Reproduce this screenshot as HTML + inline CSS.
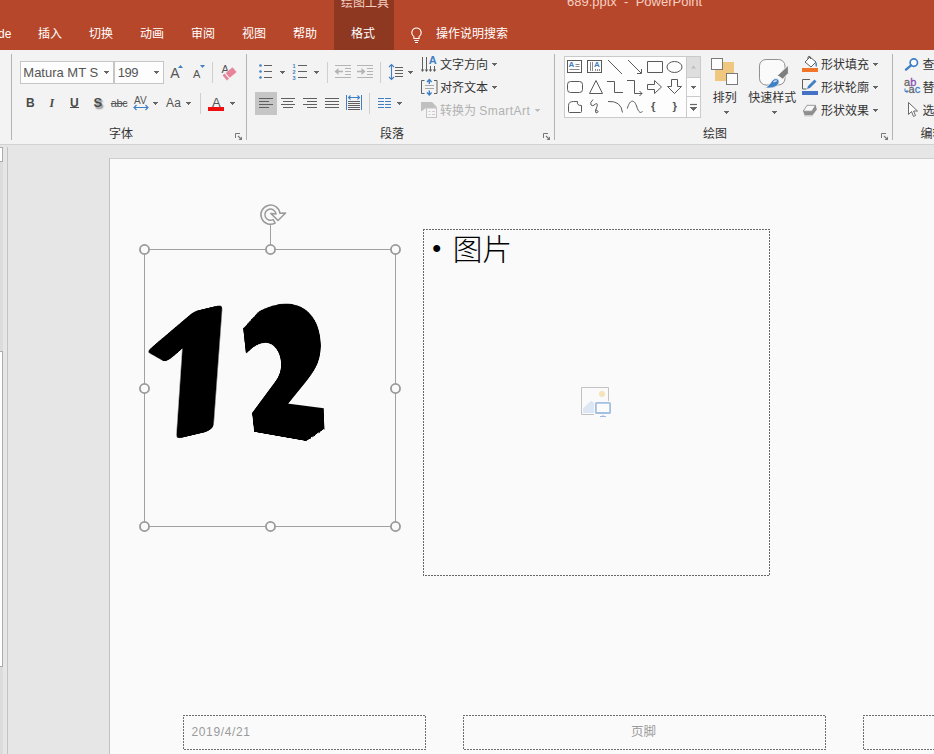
<!DOCTYPE html>
<html lang="zh-CN">
<head>
<meta charset="utf-8">
<title>689.pptx - PowerPoint</title>
<style>
html,body{margin:0;padding:0;}
body{width:934px;height:754px;overflow:hidden;background:#E6E6E6;position:relative;
  font-family:"Liberation Sans","Noto Sans CJK SC",sans-serif;}
#app{position:absolute;left:0;top:0;width:934px;height:754px;overflow:hidden;}
#gfx{position:absolute;left:0;top:0;}
.t{position:absolute;white-space:nowrap;font-size:12px;line-height:16px;height:16px;color:#333;}
.w{color:#fff;}
.dis{color:#b1b1b1;}
.lat{font-family:"Liberation Sans",sans-serif;}
#num{position:absolute;left:0;top:0;width:0;height:0;font-size:300px;line-height:300px;color:#000;white-space:nowrap;}
#num span{position:absolute;display:block;left:0;top:0;transform-origin:0 0;}
#n1{font-family:"NanumGothic","DejaVu Sans",sans-serif;font-weight:800;-webkit-text-stroke:3.67px #000;filter:drop-shadow(-0.39px 0.61px 0 #000) drop-shadow(-0.79px 1.23px 0 #000) drop-shadow(-1.58px 2.45px 0 #000);
  transform:matrix3d(0.76268723,-0.19822424,0,-3.7305874e-05,-0.021551295,0.5579859,0,7.9534672e-05,0,0,1,0,131.25344,314.39628,0,1);}
#n2{font-family:"DejaVu Sans","Liberation Sans",sans-serif;font-weight:bold;filter:drop-shadow(-3.24px 2.07px 0 #000) drop-shadow(-6.47px 4.15px 0 #000) drop-shadow(-12.95px 8.30px 0 #000) drop-shadow(-25.90px 16.59px 0 #000);
  transform:matrix3d(0.22853799,-0.15741806,0,-0.00051055084,0.1899696,0.74763952,0,0.00052581984,0,0,1,0,247.58065,286.19072,0,1);}
#bul{position:absolute;left:0;top:0;color:#000;white-space:nowrap;}
#dot{position:absolute;left:432.300px;top:227.800px;font-size:25.500px;line-height:40px;font-family:"Liberation Sans",sans-serif;}
#pic{position:absolute;left:452.700px;top:227.500px;font-size:29.700px;line-height:40px;font-weight:300;font-family:"Noto Sans CJK SC","Liberation Sans",sans-serif;}
.ft{position:absolute;font-size:12px;line-height:16px;color:#9a9a9a;white-space:nowrap;}
</style>
</head>
<body>
<div id="app">
<svg id="gfx" width="934" height="754" viewBox="0 0 934 754">
<rect x="0" y="0" width="934" height="50" fill="#B7472A"/>
<rect x="334" y="0" width="60" height="50" fill="#8E3822"/>
<rect x="0" y="50" width="934" height="94" fill="#F3F3F3"/>
<rect x="0" y="144" width="934" height="1" fill="#D2D2D2"/>
<rect x="0" y="145" width="934" height="609" fill="#E6E6E6"/>
<rect x="0" y="147" width="3" height="607" fill="#DCDCDC"/>
<rect x="-1" y="147.5" width="3.5" height="14" fill="#FFFFFF" stroke="#ABABAB"/>
<rect x="-1" y="351.5" width="3.5" height="315" fill="#FFFFFF" stroke="#ABABAB"/>
<rect x="7" y="147" width="1" height="607" fill="#C3C3C3"/>
<rect x="109" y="158" width="900" height="700" fill="#FAFAFA"/>
<rect x="109" y="158" width="900" height="1" fill="#CFCFCF"/>
<rect x="109" y="158" width="1" height="700" fill="#C2C2C2"/>
<path d="M416.5 28a4.6 4.6 0 0 0 -2.6 8.4v2.1h5.2v-2.1a4.6 4.6 0 0 0 -2.6 -8.4z" fill="none" stroke="#fff" stroke-width="1.1"/><path d="M414.3 40.5h4.4M415 42.5h3" stroke="#fff" stroke-width="1"/>
<rect x="11" y="54" width="1" height="86" fill="#B4B4B4"/>
<rect x="246" y="54" width="1" height="86" fill="#B4B4B4"/>
<rect x="554" y="54" width="1" height="86" fill="#B4B4B4"/>
<rect x="892" y="54" width="1" height="86" fill="#B4B4B4"/>
<rect x="212" y="62" width="1" height="21" fill="#CFCFCF"/>
<rect x="327" y="62" width="1" height="21" fill="#CFCFCF"/>
<rect x="380" y="62" width="1" height="21" fill="#CFCFCF"/>
<rect x="200" y="93" width="1" height="21" fill="#CFCFCF"/>
<rect x="369" y="93" width="1" height="21" fill="#CFCFCF"/>
<rect x="20.5" y="61.5" width="93" height="22" fill="#FDFDFD" stroke="#C6C6C6"/>
<rect x="114.5" y="61.5" width="49" height="22" fill="#FDFDFD" stroke="#C6C6C6"/>
<path d="M104 71h5v1h-5zM105 72h3v1h-3zM106 73h1v1h-1z" fill="#666666" shape-rendering="crispEdges"/>
<path d="M154 71h5v1h-5zM155 72h3v1h-3zM156 73h1v1h-1z" fill="#666666" shape-rendering="crispEdges"/>
<path d="M178 68l2.5-3 2.5 3z" fill="#3F7FC4"/>
<path d="M200 65h5l-2.5 3z" fill="#3F7FC4"/>
<text x="221.6" y="73" font-family="Liberation Sans, sans-serif" font-size="11" fill="#555">A</text>
<g transform="translate(230.1,73.4) rotate(-40)"><rect x="-3.4" y="-3.4" width="9.500" height="6.8" rx="1" fill="#E8849A" stroke="#F3F3F3" stroke-width="0.6"/><rect x="-7" y="-3.4" width="2.6" height="6.8" fill="#E8849A"/></g>
<rect x="70" y="107" width="9" height="1" fill="#4a4a4a"/>
<path d="M134 107.5h14M136.5 105l-2.5 2.5 2.5 2.5M145.5 105l2.5 2.5-2.5 2.5" fill="none" stroke="#3F7FC4" stroke-width="1.1"/>
<path d="M153 102h5v1h-5zM154 103h3v1h-3zM155 104h1v1h-1z" fill="#666666" shape-rendering="crispEdges"/>
<path d="M186 102h5v1h-5zM187 103h3v1h-3zM188 104h1v1h-1z" fill="#666666" shape-rendering="crispEdges"/>
<rect x="208" y="107" width="16" height="4" fill="#F00F0F"/>
<path d="M230 102h5v1h-5zM231 103h3v1h-3zM232 104h1v1h-1z" fill="#666666" shape-rendering="crispEdges"/>
<path d="M235.5 138V133.5H240" fill="none" stroke="#777" stroke-width="1"/><path d="M238 136l3.2 3.2" stroke="#777" stroke-width="1.2" fill="none"/><path d="M242 136.5V140H238.5z" fill="#777"/>
<circle cx="260.5" cy="65.5" r="1.3" fill="#3F7FC4"/><rect x="264" y="65.0" width="8" height="1" fill="#5f5f5f"/>
<circle cx="260.5" cy="71.5" r="1.3" fill="#3F7FC4"/><rect x="264" y="71.0" width="8" height="1" fill="#5f5f5f"/>
<circle cx="260.5" cy="77.5" r="1.3" fill="#3F7FC4"/><rect x="264" y="77.0" width="8" height="1" fill="#5f5f5f"/>
<path d="M280 71h5v1h-5zM281 72h3v1h-3zM282 73h1v1h-1z" fill="#666666" shape-rendering="crispEdges"/>
<rect x="298" y="65.0" width="9" height="1" fill="#5f5f5f"/>
<rect x="298" y="71.0" width="9" height="1" fill="#5f5f5f"/>
<rect x="298" y="77.0" width="9" height="1" fill="#5f5f5f"/>
<path d="M314 71h5v1h-5zM315 72h3v1h-3zM316 73h1v1h-1z" fill="#666666" shape-rendering="crispEdges"/>
<path d="M335 65.500h16M345 68.500h6M345 71.500h6M345 74.500h6M335 77.500h16" stroke="#B4B4B4" stroke-width="1"/><path d="M336 71.500h7" fill="none" stroke="#B4B4B4" stroke-width="1.600"/><path d="M334.500 71.500l4-3.500v7z" fill="#B4B4B4"/>
<path d="M357 65.500h16M367 68.500h6M367 71.500h6M367 74.500h6M357 77.500h16" stroke="#B4B4B4" stroke-width="1"/><path d="M357 71.500h7" fill="none" stroke="#B4B4B4" stroke-width="1.600"/><path d="M365.500 71.500l-4-3.500v7z" fill="#B4B4B4"/>
<path d="M391.5 64.5v15M389 67l2.5-2.5 2.5 2.5M389 77l2.5 2.5 2.5-2.5" fill="none" stroke="#3F7FC4" stroke-width="1.1"/><path d="M395 67.5h8M395 70.5h8M395 73.5h8M395 76.5h8" stroke="#5f5f5f" stroke-width="1"/>
<path d="M408 71h5v1h-5zM409 72h3v1h-3zM410 73h1v1h-1z" fill="#666666" shape-rendering="crispEdges"/>
<rect x="255" y="92" width="22" height="23" fill="#C6C6C6"/>
<path d="M259 98.5h14M259 101.5h10M259 104.5h14M259 107.5h10" stroke="#5f5f5f" stroke-width="1"/>
<path d="M281 98.5h14M283 101.5h10M281 104.5h14M283 107.5h10" stroke="#5f5f5f" stroke-width="1"/>
<path d="M303 98.5h14M307 101.5h10M303 104.5h14M307 107.5h10" stroke="#5f5f5f" stroke-width="1"/>
<path d="M325 98.5h14M325 101.5h14M325 104.5h14M325 107.5h14" stroke="#5f5f5f" stroke-width="1"/>
<path d="M346.5 95v15M361.5 95v15" stroke="#3F7FC4" stroke-width="1"/><path d="M348.5 97.5h11M350.5 95.5l-2 2 2 2M357.5 95.5l2 2-2 2" fill="none" stroke="#3F7FC4" stroke-width="1.1"/><path d="M348 101.5h12M348 103.5h12M348 105.5h12M348 107.5h12M348 109.5h12" stroke="#5f5f5f" stroke-width="1"/>
<path d="M378 98.5h6M385 98.5h6M378 101.5h6M385 101.5h6M378 104.5h6M385 104.5h6M378 107.5h6M385 107.5h6" stroke="#3F7FC4" stroke-width="1"/>
<path d="M397 102h5v1h-5zM398 103h3v1h-3zM399 104h1v1h-1z" fill="#666666" shape-rendering="crispEdges"/>
<path d="M422.500 57v13M426.500 57v13M430.500 66v4M434.500 66v4" stroke="#5f5f5f" stroke-width="1"/><path d="M420.700 69.500l1.800 2.500 1.800-2.500zM424.700 69.500l1.800 2.500 1.800-2.500zM428.700 69.500l1.800 2.500 1.800-2.500zM432.700 69.500l1.800 2.500 1.800-2.500z" fill="#5f5f5f"/>
<path d="M492 63h5v1h-5zM493 64h3v1h-3zM494 65h1v1h-1z" fill="#666666" shape-rendering="crispEdges"/>
<path d="M424.500 80.500h-3v13h3M434 80.500h3v13h-3" fill="none" stroke="#5f5f5f" stroke-width="1"/><path d="M425 85.500h9M425 88.500h9" stroke="#a8a8a8" stroke-width="1"/><path d="M429.300 79.500v4.500M427 82l2.300-2.500 2.300 2.500M429.300 95v-4.500M427 92.500l2.300 2.500 2.300-2.500" fill="none" stroke="#3F7FC4" stroke-width="1.400"/>
<path d="M492 86h5v1h-5zM493 87h3v1h-3zM494 88h1v1h-1z" fill="#666666" shape-rendering="crispEdges"/>
<path d="M421 102h11l4.500 4.500v1.500h-10.500l-5 3.500z" fill="#C0C0C0"/><rect x="426.500" y="108" width="10" height="9.500" fill="#F6F6F6" stroke="#C3C3C3"/><path d="M428.500 111.500h2M432 111.500h3M428.500 114.500h2M432 114.500h3" stroke="#D5C6D2" stroke-width="1"/>
<path d="M535 109h5v1h-5zM536 110h3v1h-3zM537 111h1v1h-1z" fill="#BDBDBD" shape-rendering="crispEdges"/>
<path d="M543.5 138V133.5H548" fill="none" stroke="#777" stroke-width="1"/><path d="M546 136l3.2 3.2" stroke="#777" stroke-width="1.2" fill="none"/><path d="M550 136.5V140H546.5z" fill="#777"/>
<rect x="564.5" y="56.5" width="136" height="61" fill="#FDFDFD" stroke="#CACACA"/>
<rect x="686.5" y="56.5" width="14" height="61" fill="#FDFDFD" stroke="#CACACA"/>
<rect x="687" y="57" width="13" height="20" fill="#DEDEDE"/>
<path d="M686.5 77.5h14M686.5 96.5h14" stroke="#CACACA"/>
<path d="M691 68.5h5l-2.5-3z" fill="#BDBDBD"/>
<path d="M691 86h5v1h-5zM692 87h3v1h-3zM693 88h1v1h-1z" fill="#666666" shape-rendering="crispEdges"/>
<path d="M690 104.500h7" stroke="#676767" stroke-width="1.200"/>
<path d="M690 106.5h7v1h-7zM691 107.5h5v1h-5zM692 108.5h3v1h-3zM693 109.5h1v1h-1z" fill="#676767" shape-rendering="crispEdges"/>
<rect x="567.5" y="60.5" width="14" height="12" fill="none" stroke="#595959"/><path d="M575.5 64.5h4M575.5 66.5h4M569.5 69.5h10" stroke="#8a8a8a"/>
<rect x="587.5" y="60.5" width="14" height="12" fill="none" stroke="#595959"/><path d="M590.5 62v9M592.5 62v9M595.5 69v2M597.5 69v2M599.5 69v2" stroke="#8a8a8a"/>
<path d="M608 60l14 14" fill="none" stroke="#595959" stroke-width="1" />
<path d="M628 60l13 13M641.5 69v4.5h-4.5" fill="none" stroke="#595959" stroke-width="1" />
<path d="M647.5 61.5h15v11h-15z" fill="none" stroke="#595959" stroke-width="1" />
<ellipse cx="674.5" cy="67" rx="7.5" ry="5.5" fill="none" stroke="#595959"/>
<rect x="567.5" y="81.5" width="15" height="11" rx="3" fill="none" stroke="#595959"/>
<path d="M589.5 93.5l6.5-13 6.5 13z" fill="none" stroke="#595959" stroke-width="1" />
<path d="M607 81.500h7.500v11h8.500" fill="none" stroke="#595959" stroke-width="1" />
<path d="M627 80.500h7.500v13h7.500M639.500 91l2.500 2.500-2.500 2.500" fill="none" stroke="#595959" stroke-width="1" />
<path d="M647.5 84.5h7v-4l7 6.500-7 6.500v-4h-7z" fill="none" stroke="#595959" stroke-width="1" />
<path d="M671.5 79.5h6v7h4l-7 7-7-7h4z" fill="none" stroke="#595959" stroke-width="1" />
<path d="M568.500 111.500v-6q0-4 5-4h4q-1 4 4 4v6q0 1-1 1h-11q-1 0-1-1z" fill="none" stroke="#595959" stroke-width="1" />
<path d="M593 99.500q-3.500 3.500-2 5.500t4.500-1q2.500-1.500 1.500 2.500l-1.500 4.500q0 3 2 1.500t-2.500-2.500" fill="none" stroke="#595959" stroke-width="1" />
<path d="M608 101.500q13-1 14.500 11" fill="none" stroke="#595959" stroke-width="1" />
<path d="M627.300 108.600C629.500 100 634 98.500 636.500 106S640.500 113 642.500 111.500" fill="none" stroke="#595959" stroke-width="1" />
<rect x="715" y="62" width="19" height="19" fill="#F0C77F"/>
<rect x="711.5" y="58.5" width="11" height="11" fill="#FDFDFD" stroke="#7a7a7a"/>
<rect x="726.5" y="73.5" width="11" height="11" fill="#FDFDFD" stroke="#7a7a7a"/>
<path d="M724 111h5v1h-5zM725 112h3v1h-3zM726 113h1v1h-1z" fill="#666666" shape-rendering="crispEdges"/>
<rect x="759.500" y="59.500" width="25.500" height="25.500" rx="6.500" fill="#FAFAFA" stroke="#909090"/>
<path d="M788.400 65.200v8l-5.700 6-5.400-3.600z" fill="#7E7E7E" stroke="#F3F3F3" stroke-width="1"/>
<path d="M778.300 76.300l4 2.700" stroke="#F3F3F3" stroke-width="0.900"/>
<path d="M765.500 88q4.500-3.500 6.800-7.600q2-2.400 5-1.600q2.600 1.600 1.600 4.400q-1.600 3.800-6.500 4.600q-3.500 0.500-6.900 0.200z" fill="#3F7FC4" stroke="#F3F3F3" stroke-width="0.800"/>
<path d="M773.500 82.200q1.600-1.700 3.300-1.200" stroke="#EAF1FA" stroke-width="1.100" fill="none"/>
<path d="M772 111h5v1h-5zM773 112h3v1h-3zM774 113h1v1h-1z" fill="#666666" shape-rendering="crispEdges"/>
<rect x="802" y="68" width="16" height="4" fill="#F0742A"/>
<path d="M805 62l5-5 6 5-5 5z" fill="#fff" stroke="#5f5f5f" stroke-width="1"/><path d="M808 59v-2q1-1.500 2.500 0v2" fill="none" stroke="#5f5f5f" stroke-width="1"/><path d="M815 61q3 2 1.500 6q-1.500-1-1-4z" fill="#3F7FC4"/>
<path d="M873 63h5v1h-5zM874 64h3v1h-3zM875 65h1v1h-1z" fill="#666666" shape-rendering="crispEdges"/>
<rect x="802" y="91" width="16" height="4" fill="#4472C4"/>
<path d="M810 79.500h-7.500v9.500h4" fill="none" stroke="#5f5f5f" stroke-width="1"/><path d="M807 89l1-3 6.500-6.500 2 2-6.500 6.500z" fill="#3F7FC4"/>
<path d="M873 86h5v1h-5zM874 87h3v1h-3zM875 88h1v1h-1z" fill="#666666" shape-rendering="crispEdges"/>
<path d="M803.200 111.500l3.800-6h8.800l1 4-4.200 5.800h-8z" fill="#8F8F8F"/><path d="M803.200 111.200l3.800-5.900h8.600l-3.700 5.900z" fill="#F8F8F8" stroke="#8A8A8A" stroke-width="0.800"/><path d="M804 115.900h8.500" stroke="#C4C4C4" stroke-width="1"/>
<path d="M873 109h5v1h-5zM874 110h3v1h-3zM875 111h1v1h-1z" fill="#666666" shape-rendering="crispEdges"/>
<path d="M881.5 138V133.5H886" fill="none" stroke="#777" stroke-width="1"/><path d="M884 136l3.2 3.2" stroke="#777" stroke-width="1.2" fill="none"/><path d="M888 136.5V140H884.5z" fill="#777"/>
<circle cx="913.800" cy="62.600" r="3.700" fill="#FBFBFB" stroke="#3F7FC4" stroke-width="1.700"/><path d="M911 65.300l-5 4.300" stroke="#3F7FC4" stroke-width="2.400" stroke-linecap="round"/>
<path d="M905 88.500v3h3M906.500 90l1.500 1.500-1.500 1.500" fill="none" stroke="#3F7FC4" stroke-width="1"/>
<path d="M908.500 102.500v12l3-3 2 5 2-1-2-4.500h4z" fill="#fff" stroke="#6a6a6a" stroke-width="1"/>
<rect x="144.500" y="249.500" width="251" height="277" fill="none" stroke="#A0A0A0"/>
<path d="M270.500 225v20" stroke="#A0A0A0"/>
<circle cx="144.5" cy="249.5" r="4.550" fill="#FBFBFB" stroke="#999999" stroke-width="1.800"/>
<circle cx="270.5" cy="249.5" r="4.550" fill="#FBFBFB" stroke="#999999" stroke-width="1.800"/>
<circle cx="395.5" cy="249.5" r="4.550" fill="#FBFBFB" stroke="#999999" stroke-width="1.800"/>
<circle cx="144.5" cy="388.5" r="4.550" fill="#FBFBFB" stroke="#999999" stroke-width="1.800"/>
<circle cx="395.5" cy="388.5" r="4.550" fill="#FBFBFB" stroke="#999999" stroke-width="1.800"/>
<circle cx="144.5" cy="526.5" r="4.550" fill="#FBFBFB" stroke="#999999" stroke-width="1.800"/>
<circle cx="270.5" cy="526.5" r="4.550" fill="#FBFBFB" stroke="#999999" stroke-width="1.800"/>
<circle cx="395.5" cy="526.5" r="4.550" fill="#FBFBFB" stroke="#999999" stroke-width="1.800"/>
<path d="M275.15 223.1A9.6 9.6 0 1 1 280 213.36L285.6 213L278 220.5L270.8 213.4L276.05 213.9A5.6 5.6 0 1 0 273.2 219.6Z" fill="#FAFAFA" stroke="#9A9A9A" stroke-width="1.5" stroke-linejoin="round"/>
<path d="M423 229.5H770" stroke="#686868" stroke-width="1" stroke-dasharray="2 1" stroke-dashoffset="0" fill="none" shape-rendering="crispEdges"/>
<path d="M423.5 229V576" stroke="#686868" stroke-width="1" stroke-dasharray="2 1" stroke-dashoffset="0" fill="none" shape-rendering="crispEdges"/>
<path d="M423 575.5H770" stroke="#686868" stroke-width="1" stroke-dasharray="2 1" stroke-dashoffset="1" fill="none" shape-rendering="crispEdges"/>
<path d="M769.5 229V576" stroke="#686868" stroke-width="1" stroke-dasharray="2 1" stroke-dashoffset="1" fill="none" shape-rendering="crispEdges"/>
<path d="M594 414.500H581.500V387.500H608.500V401" fill="none" stroke="#C2C2C2" stroke-width="1"/><path d="M583 413v-4.800l8.100-7.400 3 2.200v10z" fill="#DDE7F3"/><circle cx="602" cy="394" r="3" fill="#F6E3B8"/><rect x="595.900" y="402.800" width="14.200" height="10.200" rx="0.600" fill="#FBFBFB" stroke="#A3C0E3" stroke-width="1.800"/><path d="M603 415v1.500M600 416.500h6" stroke="#9DBBE0" stroke-width="1"/>
<path d="M183 715.5H426" stroke="#6e6e6e" stroke-width="1" stroke-dasharray="2 1" stroke-dashoffset="0" fill="none" shape-rendering="crispEdges"/>
<path d="M183.5 715V750" stroke="#6e6e6e" stroke-width="1" stroke-dasharray="2 1" stroke-dashoffset="1" fill="none" shape-rendering="crispEdges"/>
<path d="M183 749.5H426" stroke="#6e6e6e" stroke-width="1" stroke-dasharray="2 1" stroke-dashoffset="2" fill="none" shape-rendering="crispEdges"/>
<path d="M425.5 715V750" stroke="#6e6e6e" stroke-width="1" stroke-dasharray="2 1" stroke-dashoffset="2" fill="none" shape-rendering="crispEdges"/>
<path d="M463 715.5H826" stroke="#6e6e6e" stroke-width="1" stroke-dasharray="2 1" stroke-dashoffset="0" fill="none" shape-rendering="crispEdges"/>
<path d="M463.5 715V750" stroke="#6e6e6e" stroke-width="1" stroke-dasharray="2 1" stroke-dashoffset="1" fill="none" shape-rendering="crispEdges"/>
<path d="M463 749.5H826" stroke="#6e6e6e" stroke-width="1" stroke-dasharray="2 1" stroke-dashoffset="2" fill="none" shape-rendering="crispEdges"/>
<path d="M825.5 715V750" stroke="#6e6e6e" stroke-width="1" stroke-dasharray="2 1" stroke-dashoffset="2" fill="none" shape-rendering="crispEdges"/>
<path d="M863 715.5H1101" stroke="#6e6e6e" stroke-width="1" stroke-dasharray="2 1" stroke-dashoffset="0" fill="none" shape-rendering="crispEdges"/>
<path d="M863.5 715V750" stroke="#6e6e6e" stroke-width="1" stroke-dasharray="2 1" stroke-dashoffset="1" fill="none" shape-rendering="crispEdges"/>
<path d="M863 749.5H1101" stroke="#6e6e6e" stroke-width="1" stroke-dasharray="2 1" stroke-dashoffset="2" fill="none" shape-rendering="crispEdges"/>
<path d="M1100.5 715V750" stroke="#6e6e6e" stroke-width="1" stroke-dasharray="2 1" stroke-dashoffset="2" fill="none" shape-rendering="crispEdges"/>
</svg>
<span class="t lat" style="left:567px;top:-6.5px;color:#F6CFC3;font-size:13px;">689.pptx&nbsp; -&nbsp; PowerPoint</span>
<span class="t " style="left:341px;top:-5px;color:#F6CFC3;">绘图工具</span>
<span class="t w" style="left:-2px;top:26px;">de</span>
<span class="t w" style="left:38px;top:26px;">插入</span>
<span class="t w" style="left:89px;top:26px;">切换</span>
<span class="t w" style="left:140px;top:26px;">动画</span>
<span class="t w" style="left:191px;top:26px;">审阅</span>
<span class="t w" style="left:242px;top:26px;">视图</span>
<span class="t w" style="left:293px;top:26px;">帮助</span>
<span class="t w" style="left:351px;top:26px;">格式</span>
<span class="t w" style="left:436px;top:26px;">操作说明搜索</span>
<span class="t lat" style="left:23.3px;top:64.7px;font-size:13px;color:#555;">Matura MT S</span>
<span class="t lat" style="left:117.8px;top:64.7px;font-size:13px;color:#555;letter-spacing:-0.5px;">199</span>
<span class="t lat" style="left:170.3px;top:64.8px;font-size:14px;color:#555;">A</span>
<span class="t lat" style="left:193px;top:65.7px;font-size:11px;color:#555;">A</span>
<span class="t lat" style="left:26px;top:95px;font-weight:bold;font-size:12px;color:#4a4a4a;">B</span>
<span class="t lat" style="left:49.5px;top:95px;font-style:italic;font-weight:bold;font-size:12px;color:#4a4a4a;font-family:'Liberation Serif',serif;">I</span>
<span class="t lat" style="left:70px;top:95px;font-weight:bold;font-size:12px;color:#4a4a4a;">U</span>
<span class="t lat" style="left:93.5px;top:95px;font-weight:bold;font-size:13px;color:#4a4a4a;text-shadow:1.5px 1.5px 1.5px rgba(0,0,0,.45);">S</span>
<span class="t lat" style="left:110.8px;top:95px;letter-spacing:-0.45px;font-size:11px;color:#555;text-decoration:line-through;">abc</span>
<span class="t lat" style="left:134px;top:93px;font-size:10px;color:#555;">AV</span>
<span class="t lat" style="left:166px;top:95.2px;font-size:12px;letter-spacing:0.3px;color:#555;">Aa</span>
<span class="t lat" style="left:212px;top:94.5px;font-size:13px;color:#555;">A</span>
<span class="t " style="left:109px;top:125.8px;">字体</span>
<span class="t lat" style="left:292.5px;top:61.5px;font-size:5.5px;line-height:8px;height:8px;font-weight:bold;color:#3F7FC4;">1</span>
<span class="t lat" style="left:292.5px;top:67.5px;font-size:5.5px;line-height:8px;height:8px;font-weight:bold;color:#3F7FC4;">2</span>
<span class="t lat" style="left:292.5px;top:73.5px;font-size:5.5px;line-height:8px;height:8px;font-weight:bold;color:#3F7FC4;">3</span>
<span class="t lat" style="left:428.800px;top:53.800px;font-size:11px;line-height:12px;height:12px;font-weight:bold;color:#3F7FC4;">A</span>
<span class="t " style="left:440px;top:57px;">文字方向</span>
<span class="t " style="left:440px;top:80px;">对齐文本</span>
<span class="t dis" style="left:440px;top:103px;">转换为 <span style="letter-spacing:0.45px">SmartArt</span></span>
<span class="t " style="left:380px;top:125.8px;">段落</span>
<span class="t lat" style="left:568.5px;top:60px;font-size:8px;line-height:9px;height:9px;font-weight:bold;color:#3F7FC4;">A</span>
<span class="t lat" style="left:594px;top:60px;font-size:8px;line-height:9px;height:9px;font-weight:bold;color:#3F7FC4;">A</span>
<span class="t lat" style="left:651px;top:97.500px;font-size:11.500px;line-height:16px;font-weight:bold;color:#595959;">{</span>
<span class="t lat" style="left:672.500px;top:97.500px;font-size:11.500px;line-height:16px;font-weight:bold;color:#595959;">}</span>
<span class="t " style="left:712.7px;top:90.3px;">排列</span>
<span class="t " style="left:748.3px;top:90.3px;">快速样式</span>
<span class="t " style="left:703px;top:125.8px;">绘图</span>
<span class="t " style="left:821px;top:57px;">形状填充</span>
<span class="t " style="left:821px;top:80px;">形状轮廓</span>
<span class="t " style="left:821px;top:103px;">形状效果</span>
<span class="t " style="left:922.5px;top:57px;">查找</span>
<span class="t lat" style="left:904px;top:77px;font-size:11px;line-height:11px;height:11px;color:#666;-webkit-text-stroke:0.3px #666;">a<span style="color:#8A4FB5;-webkit-text-stroke:0.3px #8A4FB5;">b</span></span>
<span class="t lat" style="left:908.500px;top:84.300px;font-size:11px;line-height:11px;height:11px;color:#666;-webkit-text-stroke:0.3px #666;">a<span style="color:#3F7FC4;-webkit-text-stroke:0.3px #3F7FC4;">c</span></span>
<span class="t " style="left:922.5px;top:80px;">替换</span>
<span class="t " style="left:922.5px;top:103px;">选择</span>
<span class="t " style="left:920.5px;top:125.8px;">编辑</span>
<div id="num"><span id="n1">1</span><span id="n2">2</span></div>
<div id="bul"><span id="dot">•</span><span id="pic">图片</span></div>
<span class="ft lat" id="date" style="left:191.500px;top:724px;letter-spacing:0.62px;">2019/4/21</span>
<span class="ft" id="foot" style="left:631px;top:724px;font-size:12.5px;">页脚</span>
</div>
</body>
</html>
